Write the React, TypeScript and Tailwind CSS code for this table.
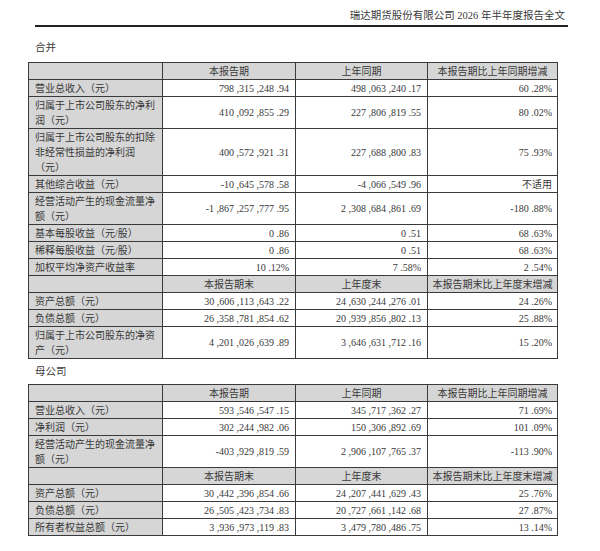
import React from 'react';

type Row = {
  label: React.ReactNode;
  cur: string;
  prev: string;
  diff: string;
};

const font = {
  fontFamily: '"Liberation Serif", "Noto Sans CJK SC", serif',
};

// SimSun style numbers: comma and point take half an em like digits
const Num = ({ v }: { v: string }) => (
  <>
    {v.split('').map((c, i) =>
      c === ',' || c === '.' ? (
        <span key={i} className="inline-block w-[0.5em]">
          {c}
        </span>
      ) : (
        <React.Fragment key={i}>{c}</React.Fragment>
      )
    )}
  </>
);

const cell = 'border border-[#3a3a3a] py-[0.5px] leading-[15px] align-middle';

const HeadRow = ({ cols }: { cols: string[] }) => (
  <tr className="bg-[#d6d6d6]">
    <td className={cell}></td>
    {cols.map((c) => (
      <td key={c} className={`${cell} text-center whitespace-nowrap`}>
        {c}
      </td>
    ))}
  </tr>
);

const DataRow = ({ r }: { r: Row }) => (
  <tr>
    <td className={`${cell} bg-[#d6d6d6] pl-[6px] pr-[4px]`}>{r.label}</td>
    <td className={`${cell} text-right pr-[6px] whitespace-nowrap`}>
      <Num v={r.cur} />
    </td>
    <td className={`${cell} text-right pr-[6px] whitespace-nowrap`}>
      <Num v={r.prev} />
    </td>
    <td className={`${cell} text-right pr-[5px] whitespace-nowrap`}>
      <Num v={r.diff} />
    </td>
  </tr>
);

const periodHead = ['本报告期', '上年同期', '本报告期比上年同期增减'];
const endHead = ['本报告期末', '上年度末', '本报告期末比上年度末增减'];

const groupA: Row[] = [
  { label: '营业总收入（元）', cur: '798,315,248.94', prev: '498,063,240.17', diff: '60.28%' },
  {
    label: (
      <>
        归属于上市公司股东的净利
        <br />
        润（元）
      </>
    ),
    cur: '410,092,855.29',
    prev: '227,806,819.55',
    diff: '80.02%',
  },
  {
    label: (
      <>
        归属于上市公司股东的扣除
        <br />
        非经常性损益的净利润
        <br />
        （元）
      </>
    ),
    cur: '400,572,921.31',
    prev: '227,688,800.83',
    diff: '75.93%',
  },
  { label: '其他综合收益（元）', cur: '-10,645,578.58', prev: '-4,066,549.96', diff: '不适用' },
  {
    label: (
      <>
        经营活动产生的现金流量净
        <br />
        额（元）
      </>
    ),
    cur: '-1,867,257,777.95',
    prev: '2,308,684,861.69',
    diff: '-180.88%',
  },
  { label: '基本每股收益（元/股）', cur: '0.86', prev: '0.51', diff: '68.63%' },
  { label: '稀释每股收益（元/股）', cur: '0.86', prev: '0.51', diff: '68.63%' },
  { label: '加权平均净资产收益率', cur: '10.12%', prev: '7.58%', diff: '2.54%' },
];

const groupB: Row[] = [
  { label: '资产总额（元）', cur: '30,606,113,643.22', prev: '24,630,244,276.01', diff: '24.26%' },
  { label: '负债总额（元）', cur: '26,358,781,854.62', prev: '20,939,856,802.13', diff: '25.88%' },
  {
    label: (
      <>
        归属于上市公司股东的净资
        <br />
        产（元）
      </>
    ),
    cur: '4,201,026,639.89',
    prev: '3,646,631,712.16',
    diff: '15.20%',
  },
];

const parentA: Row[] = [
  { label: '营业总收入（元）', cur: '593,546,547.15', prev: '345,717,362.27', diff: '71.69%' },
  { label: '净利润（元）', cur: '302,244,982.06', prev: '150,306,892.69', diff: '101.09%' },
  {
    label: (
      <>
        经营活动产生的现金流量净
        <br />
        额（元）
      </>
    ),
    cur: '-403,929,819.59',
    prev: '2,906,107,765.37',
    diff: '-113.90%',
  },
];

const parentB: Row[] = [
  { label: '资产总额（元）', cur: '30,442,396,854.66', prev: '24,207,441,629.43', diff: '25.76%' },
  { label: '负债总额（元）', cur: '26,505,423,734.83', prev: '20,727,661,142.68', diff: '27.87%' },
  { label: '所有者权益总额（元）', cur: '3,936,973,119.83', prev: '3,479,780,486.75', diff: '13.14%' },
];

const ReportTable = ({ top, bottom }: { top: Row[]; bottom: Row[] }) => (
  <table className="ml-[28px] w-[529px] table-fixed border-collapse border border-[#333] text-[10px] text-[#383838]">
    <colgroup>
      <col className="w-[134px]" />
      <col className="w-[133px]" />
      <col className="w-[132px]" />
      <col className="w-[130px]" />
    </colgroup>
    <tbody>
      <HeadRow cols={periodHead} />
      {top.map((r, i) => (
        <DataRow key={'t' + i} r={r} />
      ))}
      <HeadRow cols={endHead} />
      {bottom.map((r, i) => (
        <DataRow key={'b' + i} r={r} />
      ))}
    </tbody>
  </table>
);

export default function App() {
  return (
    <div className="w-[600px] h-[551px] bg-white overflow-hidden" style={font}>
      <div className="ml-[35px] w-[533px] pt-[9px] pb-[2px] border-b-2 border-[#222] flex justify-end">
        <span className="text-[10.5px] leading-[14px] text-[#3a3a3a] pr-[3px]">
          瑞达期货股份有限公司 2026 年半年度报告全文
        </span>
      </div>

      <div className="mt-[14px] ml-[35px] text-[10.5px] leading-[14px] text-[#3a3a3a]">合并</div>
      <div className="mt-[7px]">
        <ReportTable top={groupA} bottom={groupB} />
      </div>

      <div className="mt-[6px] ml-[35px] text-[10.5px] leading-[14px] text-[#3a3a3a]">母公司</div>
      <div className="mt-[5px]">
        <ReportTable top={parentA} bottom={parentB} />
      </div>
    </div>
  );
}
